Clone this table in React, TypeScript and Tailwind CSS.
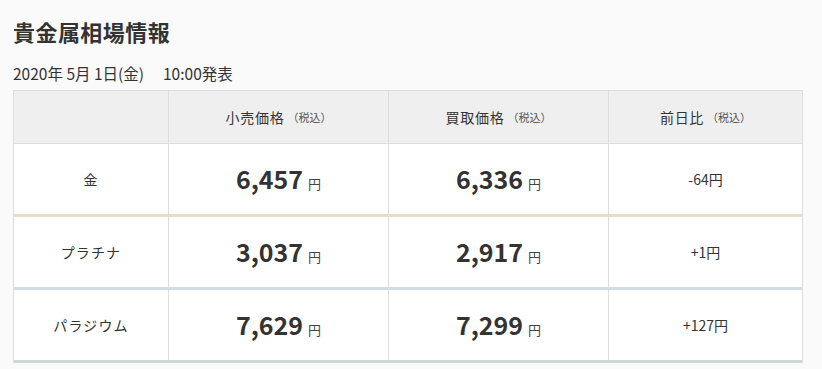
const rows = [
  { name: "金", retail: "6,457", buy: "6,336", diff: "-64円", line: "border-b-[#e6dfc8]" },
  { name: "プラチナ", retail: "3,037", buy: "2,917", diff: "+1円", line: "border-b-[#d3dce3]" },
  { name: "パラジウム", retail: "7,629", buy: "7,299", diff: "+127円", line: "border-b-[#c9d9d9]" },
]

const cjk = "font-['Noto_Sans_CJK_JP','Noto_Sans',sans-serif]"

function Price({ value }: { value: string }) {
  return (
    <span className="flex items-baseline gap-[5px]">
      <span className="text-[25px] font-bold text-[#333]">{value}</span>
      <span className="text-[13px] text-[#444]">円</span>
    </span>
  )
}

function Head({ label }: { label: string }) {
  return (
    <>
      <span className="tracking-[0.05em]">{label}</span>
      <span className="ml-[3px] text-[11px] text-[#555]">（税込）</span>
    </>
  )
}

export default function App() {
  return (
    <div className={`min-h-screen bg-[#fafafa] px-[13px] pt-[17px] text-[#333] ${cjk}`}>
      <h1 className="text-[22px] font-bold leading-[28px] tracking-[0.02em] text-[#333]">
        貴金属相場情報
      </h1>
      <p className="mt-[18px] text-[15.5px] leading-[21px] text-[#333]">
        2020年 5月 1日(金)　 10:00発表
      </p>
      <div className="mt-[6px] w-[790px] border-l border-r border-[#dddddd] bg-white">
        <div className="flex h-[54px] border-y border-[#dddddd] bg-[#efefef] text-[14px]">
          <div className="w-[155px] border-r border-[#dddddd]" />
          <div className="flex w-[220px] items-center justify-center border-r border-[#dddddd]">
            <Head label="小売価格" />
          </div>
          <div className="flex w-[220px] items-center justify-center border-r border-[#dddddd]">
            <Head label="買取価格" />
          </div>
          <div className="flex flex-1 items-center justify-center">
            <Head label="前日比" />
          </div>
        </div>
        {rows.map((r) => (
          <div key={r.name} className={`flex h-[73px] border-b-[3px] ${r.line} text-[14px]`}>
            <div className="flex w-[155px] items-center justify-center border-r border-[#dddddd] tracking-[0.08em]">
              {r.name}
            </div>
            <div className="flex w-[220px] items-center justify-center border-r border-[#dddddd]">
              <Price value={r.retail} />
            </div>
            <div className="flex w-[220px] items-center justify-center border-r border-[#dddddd]">
              <Price value={r.buy} />
            </div>
            <div className="flex flex-1 items-center justify-center">{r.diff}</div>
          </div>
        ))}
      </div>
    </div>
  )
}
